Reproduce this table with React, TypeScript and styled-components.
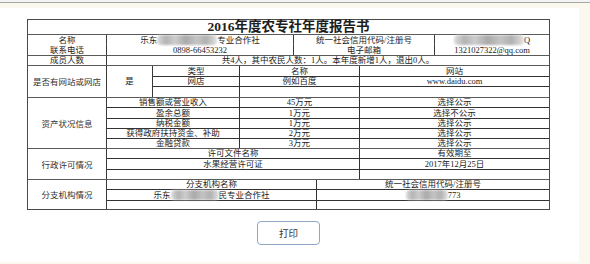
import React from "react";
import styled, { createGlobalStyle } from "styled-components";

const GlobalStyle = createGlobalStyle`
  html, body {
    margin: 0;
    padding: 0;
    background: #fbf8ef;
  }
  body {
    font-family: "Liberation Serif", "Noto Sans CJK SC", serif;
    color: #222;
  }
`;

const TopRule = styled.div`
  height: 2px;
  background: #f3f3f3;
  border-bottom: 1px solid #a8a8a8;
`;

const Panel = styled.div`
  margin-top: 5px;
  width: 579px;
  height: 254px;
  box-sizing: border-box;
  padding: 11px 0 0 27px;
  background: #fff;
`;

const Content = styled.div`
  width: 523px;
  display: flex;
  flex-direction: column;
  align-items: center;
`;

const Sheet = styled.div`
  width: 523px;
  box-sizing: border-box;
  border: 1px solid #4a4a4a;
  background: #5a5a5a;
  display: flex;
  flex-direction: column;
  gap: 1px;
`;

const TitleRow = styled.div`
  height: 14px;
  background: #fff;
  display: flex;
  align-items: center;
  justify-content: center;
  font-size: 13.5px;
  font-weight: bold;
  line-height: 1;
  color: #1e1e1e;
`;

const Row = styled.div<{ $cols: string; $h: number }>`
  display: grid;
  grid-template-columns: ${(p) => p.$cols};
  height: ${(p) => p.$h}px;
  gap: 1px;
  background: #3a3a3a;
`;

const Block = styled.div<{ $cols: string }>`
  display: grid;
  grid-template-columns: ${(p) => p.$cols};
  gap: 1px;
  background: #3a3a3a;
`;

const SubGrid = styled.div<{ $cols: string; $rows: string }>`
  display: grid;
  grid-template-columns: ${(p) => p.$cols};
  grid-template-rows: ${(p) => p.$rows};
  gap: 1px;
  background: #333;
`;

const Cell = styled.div`
  background: #fff;
  display: flex;
  align-items: center;
  justify-content: center;
  font-size: 8.5px;
  line-height: 1;
  white-space: nowrap;
  overflow: visible;
  min-width: 0;
`;

const SideLabel = styled(Cell)`
  font-family: "Noto Sans CJK SC", sans-serif;
  color: #333;
`;

const Smudge = styled.span<{ $w: number }>`
  display: inline-block;
  width: ${(p) => p.$w}px;
  height: 10px;
  background: linear-gradient(
    90deg,
    #dcdcdc,
    #b3b3b3 15%,
    #cdcdcd 30%,
    #a9a9a9 48%,
    #c4c4c4 66%,
    #b0b0b0 82%,
    #e2e2e2
  );
  filter: blur(1px);
  border-radius: 4px;
`;

const PrintButton = styled.button`
  margin-top: 11px;
  width: 63px;
  height: 24px;
  padding: 0;
  border: 1px solid #8ea6c8;
  border-radius: 4px;
  background: #fff;
  font-family: "Noto Sans CJK SC", sans-serif;
  font-size: 9.5px;
  color: #333;
`;

const TOP_COLS = "78px 186px 140px 1fr";
const WIDE_COLS = "78px 1fr";

const assets = [
  { label: "销售额或营业收入", value: "45万元", show: "选择公示" },
  { label: "盈余总额", value: "1万元", show: "选择不公示" },
  { label: "纳税金额", value: "1万元", show: "选择公示" },
  { label: "获得政府扶持资金、补助", value: "2万元", show: "选择公示" },
  { label: "金融贷款", value: "3万元", show: "选择公示" },
];

export default function App() {
  return (
    <>
      <GlobalStyle />
      <TopRule />
      <Panel>
        <Content>
          <Sheet>
            <TitleRow>2016年度农专社年度报告书</TitleRow>

            <Row $cols={TOP_COLS} $h={9}>
              <Cell>名称</Cell>
              <Cell>
                乐东<Smudge $w={60} />专业合作社
              </Cell>
              <Cell>统一社会信用代码/注册号</Cell>
              <Cell>
                <Smudge $w={70} />Q
              </Cell>
            </Row>
            <Row $cols={TOP_COLS} $h={10}>
              <Cell>联系电话</Cell>
              <Cell>0898-66453232</Cell>
              <Cell>电子邮箱</Cell>
              <Cell>1321027322@qq.com</Cell>
            </Row>
            <Row $cols={WIDE_COLS} $h={9}>
              <Cell>成员人数</Cell>
              <Cell>共4人，其中农民人数：1人。本年度新增1人，退出0人。</Cell>
            </Row>

            <Block $cols="78px 45px 1fr">
              <SideLabel>是否有网站或网店</SideLabel>
              <Cell>是</Cell>
              <SubGrid $cols="86px 119px 1fr" $rows="10px 9px 10px">
                <Cell>类型</Cell>
                <Cell>名称</Cell>
                <Cell>网站</Cell>
                <Cell>网店</Cell>
                <Cell>例如百度</Cell>
                <Cell>www.daidu.com</Cell>
                <Cell />
                <Cell />
                <Cell />
              </SubGrid>
            </Block>

            <Block $cols={WIDE_COLS}>
              <SideLabel>资产状况信息</SideLabel>
              <SubGrid $cols="132px 119px 1fr" $rows="9px 10px 9px 9px 9px">
                {assets.map((a) => (
                  <React.Fragment key={a.label}>
                    <Cell>{a.label}</Cell>
                    <Cell>{a.value}</Cell>
                    <Cell>{a.show}</Cell>
                  </React.Fragment>
                ))}
              </SubGrid>
            </Block>

            <Block $cols={WIDE_COLS}>
              <SideLabel>行政许可情况</SideLabel>
              <SubGrid $cols="252px 1fr" $rows="9px 10px 9px">
                <Cell>许可文件名称</Cell>
                <Cell>有效期至</Cell>
                <Cell>水果经营许可证</Cell>
                <Cell>2017年12月25日</Cell>
                <Cell />
                <Cell />
              </SubGrid>
            </Block>

            <Block $cols={WIDE_COLS}>
              <SideLabel>分支机构情况</SideLabel>
              <SubGrid $cols="209px 1fr" $rows="9px 10px 8px">
                <Cell>分支机构名称</Cell>
                <Cell>统一社会信用代码/注册号</Cell>
                <Cell>
                  乐东<Smudge $w={48} />民专业合作社
                </Cell>
                <Cell>
                  <Smudge $w={42} />773
                </Cell>
                <Cell />
                <Cell />
              </SubGrid>
            </Block>
          </Sheet>
          <PrintButton type="button">打印</PrintButton>
        </Content>
      </Panel>
    </>
  );
}
